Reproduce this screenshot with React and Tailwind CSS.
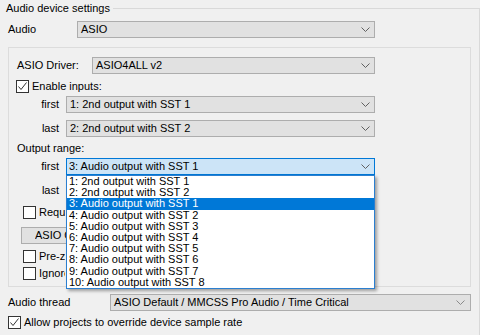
import React from "react";

function Chevron({ color = "#606060" }) {
  return (
    <svg width="9" height="5" viewBox="0 0 9 5" className="shrink-0">
      <path d="M0.5 0.5 L4.5 4.5 L8.5 0.5" fill="none" stroke={color} strokeWidth="1" />
    </svg>
  );
}

function Check({ checked }) {
  return (
    <div className="flex h-[13px] w-[13px] shrink-0 items-center justify-center border border-[#333333] bg-white">
      {checked && (
        <svg width="11" height="11" viewBox="0 0 11 11">
          <path d="M1.5 5.5 L4 8.5 L9.5 1.5" fill="none" stroke="#333333" strokeWidth="1" />
        </svg>
      )}
    </div>
  );
}

const items = [
  "1: 2nd output with SST 1",
  "2: 2nd output with SST 2",
  "3: Audio output with SST 1",
  "4: Audio output with SST 2",
  "5: Audio output with SST 3",
  "6: Audio output with SST 4",
  "7: Audio output with SST 5",
  "8: Audio output with SST 6",
  "9: Audio output with SST 7",
  "10: Audio output with SST 8",
];

export default function App() {
  return (
    <div className="h-[335px] w-[480px] overflow-hidden bg-[#f0f0f0] font-['Liberation_Sans',Arial,sans-serif] text-[11px] leading-[13px] text-black">
      {/* group box title row */}
      <div className="flex h-[17px] items-start">
        <div className="h-[17px] pl-[6px] pr-[3px] leading-[17px]">Audio device settings</div>
        <div className="mt-[8px] h-[9px] flex-1 border-t border-r border-[#d9d9d9]" />
      </div>
      <div className="border-r border-[#d9d9d9] pl-[8px] pt-[4px] pb-[20px]">
        {/* Audio row */}
        <div className="flex items-center">
          <div className="w-[69px]">Audio</div>
          <div className="flex h-[17px] w-[298px] items-center justify-between border border-[#adadad] bg-[#e1e1e1] pl-[3px] pr-[4px]">
            <span>ASIO</span>
            <Chevron />
          </div>
        </div>

        {/* inner panel */}
        <div className="mt-[9px] h-[240px] w-[463px] border border-[#dcdcdc] pl-[8px] pt-[9px]">
          <div className="flex items-center">
            <div className="w-[75px]">ASIO Driver:</div>
            <div className="flex h-[17px] w-[283px] items-center justify-between border border-[#adadad] bg-[#e1e1e1] pl-[3px] pr-[4px]">
              <span>ASIO4ALL v2</span>
              <Chevron />
            </div>
          </div>

          <div className="mt-[6px] -ml-[1px] flex items-center gap-[3px]">
            <Check checked />
            <span>Enable inputs:</span>
          </div>

          <div className="mt-[3px] flex items-center">
            <div className="w-[49px] pr-[7px] text-right">first</div>
            <div className="flex h-[17px] w-[309px] items-center justify-between border border-[#adadad] bg-[#e1e1e1] pl-[3px] pr-[4px]">
              <span>1: 2nd output with SST 1</span>
              <Chevron />
            </div>
          </div>

          <div className="mt-[7px] flex items-center">
            <div className="w-[49px] pr-[7px] text-right">last</div>
            <div className="flex h-[17px] w-[309px] items-center justify-between border border-[#adadad] bg-[#e1e1e1] pl-[3px] pr-[4px]">
              <span>2: 2nd output with SST 2</span>
              <Chevron />
            </div>
          </div>

          <div className="mt-[5px] h-[13px]">Output range:</div>

          <div className="mt-[3px] flex items-center">
            <div className="w-[49px] pr-[7px] text-right">first</div>
            <div className="relative z-10 flex h-[17px] w-[309px] items-center justify-between border border-[#0078d7] bg-[#cce4f7] pl-[2px] pr-[4px]">
              <span>3: Audio output with SST 1</span>
              <Chevron />
              {/* open dropdown list */}
              <div className="absolute left-[-1px] top-[16px] flex h-[114px] w-[309px] flex-col border border-[#2b7fd0] bg-white shadow-[2px_2px_3px_rgba(0,0,0,0.35)]">
                {items.map((t, i) => (
                  <div
                    key={t}
                    className={
                      i === 2
                        ? "h-[11.2px] bg-[#0078d7] pl-[2px] leading-[11.2px] text-white"
                        : "h-[11.2px] pl-[2px] leading-[11.2px] text-black"
                    }
                  >
                    {t}
                  </div>
                ))}
              </div>
            </div>
          </div>

          <div className="mt-[7px] flex items-center">
            <div className="w-[49px] pr-[7px] text-right">last</div>
            <div className="flex h-[17px] w-[309px] items-center justify-end border border-[#adadad] bg-[#e1e1e1] pl-[3px] pr-[4px]">
              <Chevron />
            </div>
          </div>

          <div className="mt-[7px] ml-[6px] flex items-center gap-[3px]">
            <Check />
            <span className="w-[26px] overflow-hidden whitespace-nowrap">Request</span>
          </div>

          <div className="mt-[8px] ml-[4px] flex h-[17px] w-[118px] items-center border border-[#adadad] bg-[#e1e1e1] pl-[13px]">
            <span className="w-[31px] overflow-hidden whitespace-nowrap">ASIO Control Panel</span>
          </div>

          <div className="mt-[6px] ml-[6px] flex items-center gap-[3px]">
            <Check />
            <span className="w-[26px] overflow-hidden whitespace-nowrap">Pre-zero</span>
          </div>

          <div className="mt-[4px] ml-[6px] flex items-center gap-[3px]">
            <Check />
            <span className="w-[26px] overflow-hidden whitespace-nowrap">Ignore</span>
          </div>
        </div>

        {/* Audio thread row */}
        <div className="mt-[7px] flex items-center">
          <div className="w-[102px]">Audio thread</div>
          <div className="flex h-[17px] w-[361px] items-center justify-between border border-[#adadad] bg-[#e1e1e1] pl-[3px] pr-[5px]">
            <span>ASIO Default / MMCSS Pro Audio / Time Critical</span>
            <Chevron color="#8a8a8a" />
          </div>
        </div>

        <div className="mt-[5px] flex items-center gap-[3px]">
          <Check checked />
          <span>Allow projects to override device sample rate</span>
        </div>
      </div>
    </div>
  );
}
